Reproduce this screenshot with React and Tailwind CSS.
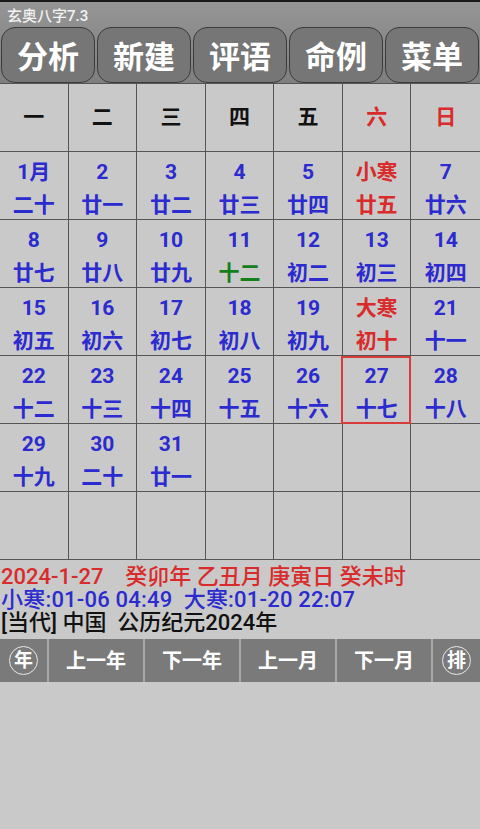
import React from "react";

const BLUE = "text-[#2b2bcf]";
const RED = "text-[#d92b2b]";
const GREEN = "text-[#13801a]";

const weeks = [
  [
    ["1月", "二十"],
    ["2", "廿一"],
    ["3", "廿二"],
    ["4", "廿三"],
    ["5", "廿四"],
    ["小寒", "廿五", "red"],
    ["7", "廿六"],
  ],
  [
    ["8", "廿七"],
    ["9", "廿八"],
    ["10", "廿九"],
    ["11", "十二", "green"],
    ["12", "初二"],
    ["13", "初三"],
    ["14", "初四"],
  ],
  [
    ["15", "初五"],
    ["16", "初六"],
    ["17", "初七"],
    ["18", "初八"],
    ["19", "初九"],
    ["大寒", "初十", "red"],
    ["21", "十一"],
  ],
  [
    ["22", "十二"],
    ["23", "十三"],
    ["24", "十四"],
    ["25", "十五"],
    ["26", "十六"],
    ["27", "十七", "today"],
    ["28", "十八"],
  ],
  [
    ["29", "十九"],
    ["30", "二十"],
    ["31", "廿一"],
    null,
    null,
    null,
    null,
  ],
  [null, null, null, null, null, null, null],
];

const heads = ["一", "二", "三", "四", "五", "六", "日"];

function Cell({ d, col }) {
  const last = col === 6;
  const base =
    "relative h-[68px] border-b border-[#555] " + (last ? "" : "border-r");
  if (!d) return <div className={base}></div>;
  const kind = d[2];
  let topC = BLUE;
  let botC = BLUE;
  if (kind === "red") {
    topC = RED;
    botC = RED;
  }
  if (kind === "green") botC = GREEN;
  return (
    <div className={base + " flex flex-col items-center pt-[4px] font-bold text-[21px]"}>
      <div className={"h-[33px] leading-[33px] " + topC}>{d[0]}</div>
      <div className={"h-[33px] leading-[33px] " + botC}>{d[1]}</div>
      {kind === "today" && (
        <div className="absolute left-[-2px] top-0 right-[-1px] bottom-[-1px] border-2 border-[#d93a3a]"></div>
      )}
    </div>
  );
}

export default function App() {
  const font = { fontFamily: '"Roboto", "Noto Sans CJK SC", sans-serif' };
  return (
    <div className="w-[480px] h-[829px] bg-[#c9c9c9] overflow-hidden" style={font}>
      <div className="bg-gradient-to-b from-[#959595] to-[#7e7e7e] border-t-2 border-[#1a1a1a]">
        <div className="h-[25px] flex items-center pl-[7px] pt-[3px] text-[15px] font-medium text-[#f2f2f2] leading-none">
          玄奥八字7.3
        </div>
        <div className="h-[56px] flex gap-[2px] pl-[1px]">
          {["分析", "新建", "评语", "命例", "菜单"].map((t) => (
            <div
              key={t}
              className="w-[94px] shrink-0 h-[56px] rounded-[14px] border border-[#3c3c3c] bg-[#767676] flex items-center justify-center pt-[5px] text-white font-bold text-[31px] leading-none"
            >
              {t}
            </div>
          ))}
        </div>
      </div>
      <div className="grid grid-cols-7 border-t border-[#555]">
        {heads.map((h, i) => (
          <div
            key={h}
            className={
              "h-[68px] border-b border-[#555] flex items-center justify-center font-bold text-[21px] " +
              (i === 6 ? "" : "border-r ") +
              (i >= 5 ? RED : "text-[#111]")
            }
          >
            {h}
          </div>
        ))}
        {weeks.map((w, ri) =>
          w.map((d, ci) => <Cell key={ri + "-" + ci} d={d} col={ci} />)
        )}
      </div>
      <div className="pt-[5px] pl-[1px] text-[22px] leading-[23px] font-medium whitespace-pre">
        <div className={RED}>{"2024-1-27    癸卯年 乙丑月 庚寅日 癸未时"}</div>
        <div className={BLUE + " tracking-[0.2px]"}>{"小寒:01-06 04:49  大寒:01-20 22:07"}</div>
        <div className="text-[#111]">{"[当代] 中国  公历纪元2024年"}</div>
      </div>
      <div className="mt-[5px] h-[43px] flex gap-[2px] bg-[#a8a8a8]">
        <div className="w-[47px] bg-[#7a7a7a] flex items-center justify-center">
          <div className="w-[29px] h-[29px] rounded-full border border-[#e8e8e8] flex items-center justify-center text-white font-bold text-[19px] leading-none">
            年
          </div>
        </div>
        {["上一年", "下一年", "上一月", "下一月"].map((t) => (
          <div
            key={t}
            className="w-[94px] bg-[#7a7a7a] flex items-center justify-center text-white font-bold text-[20px] leading-none"
          >
            {t}
          </div>
        ))}
        <div className="w-[47px] bg-[#7a7a7a] flex items-center justify-center">
          <div className="w-[29px] h-[29px] rounded-full border border-[#e8e8e8] flex items-center justify-center text-white font-bold text-[19px] leading-none">
            排
          </div>
        </div>
      </div>
    </div>
  );
}
